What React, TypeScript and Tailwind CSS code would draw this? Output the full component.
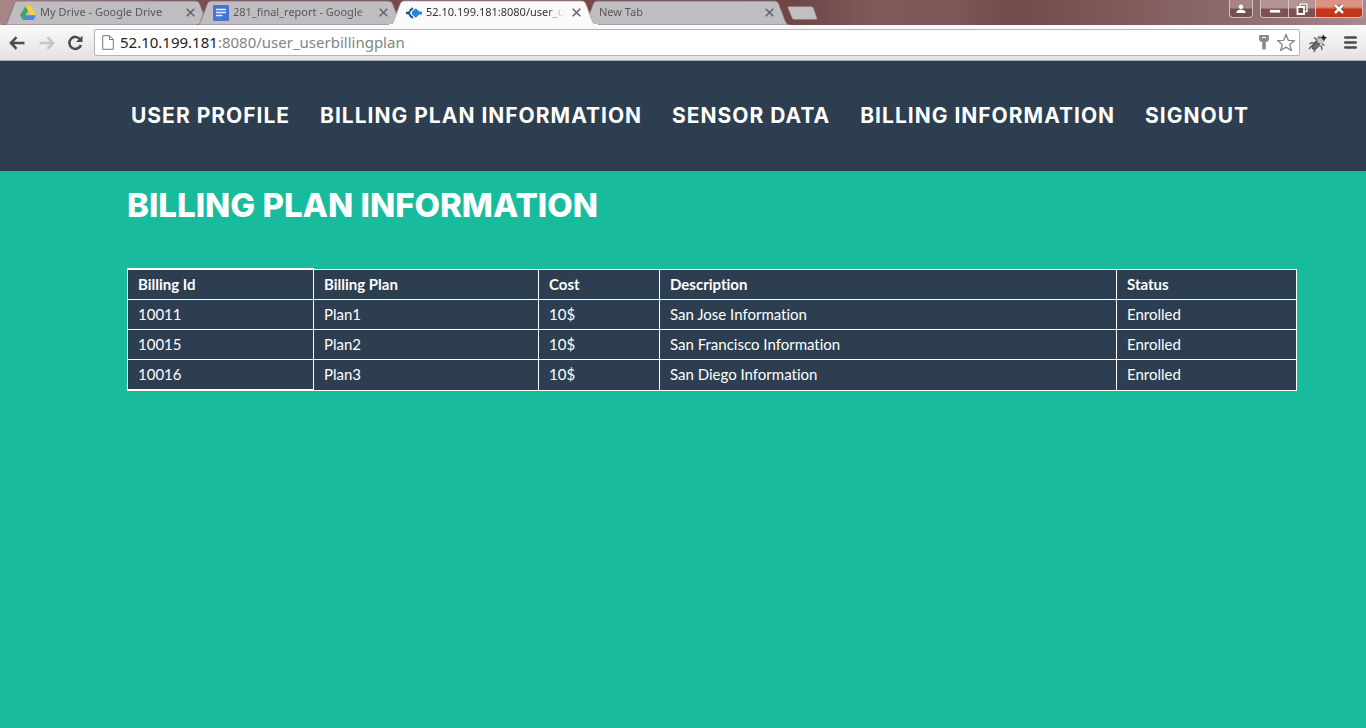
import type { ReactNode } from "react";

const ui = "font-['Noto_Sans',sans-serif]";

function CloseMark() {
  return (
    <svg viewBox="0 0 9 9" className="size-[9px]" aria-hidden="true">
      <path d="M0.7 0.7 8.3 8.3M8.3 0.7 0.7 8.3" stroke="currentColor" strokeWidth="1.6" />
    </svg>
  );
}

function DriveIcon() {
  return (
    <svg viewBox="0 0 16 14" className="h-[14px] w-4 shrink-0" aria-hidden="true">
      <path d="M5.5 0 0 9.3 2.7 14 8.2 4.7Z" fill="#3fa66a" />
      <path d="M5.5 0H10.6L16 9.3H10.8Z" fill="#fbcf3a" />
      <path d="M5.4 9.3H16L13.3 14H2.7Z" fill="#4a86e0" />
    </svg>
  );
}

function DocsIcon() {
  return (
    <svg viewBox="0 0 16 16" className="size-4 shrink-0" aria-hidden="true">
      <rect width="16" height="16" rx="1" fill="#4774cf" />
      <path d="M3 4.5H13M3 7.5H13M3 10.5H9.5" stroke="#e8eefb" strokeWidth="1.4" />
    </svg>
  );
}

function SiteIcon() {
  return (
    <svg viewBox="0 0 16 12" className="h-3 w-4 shrink-0" aria-hidden="true">
      <path d="M7 1.2Q4 2.500 2.800 6Q4 9.500 7 10.8" fill="none" stroke="#1b4f86" strokeWidth="1.900" />
      <path d="M0 6H3" stroke="#1b4f86" strokeWidth="2.4" />
      <path d="M9.8 1.200 13.200 4.600H16V7.400H13.200L9.800 10.800 6 7.500V4.500Z" fill="#1e88dd" />
    </svg>
  );
}

type TabProps = { title: string; icon?: ReactNode; active?: boolean };

function Tab({ title, icon, active }: TabProps) {
  return (
    <div className={active ? "relative z-10 -ml-4 h-[25px] w-[209px] shrink" : "relative -ml-4 h-[25px] w-[209px] shrink"}>
      <svg viewBox="0 0 209 25" preserveAspectRatio="none" className="absolute inset-0 size-full" aria-hidden="true">
        <path
          d="M0 25C4 24.500 4 23 5.500 19L11 4.500C12 2 13 1 15.500 1H192C195 1 196 2 197 4.500L202.500 19C204 23 204.500 24.500 209 25Z"
          fill={active ? "#fafafa" : "#bfbdc1"}
          stroke={active ? "#b5a4a6" : "#7f6f74"}
          strokeWidth="0.8"
        />
        {active && <path d="M0 25H209" stroke="#fafafa" strokeWidth="2" />}
      </svg>
      <div className="relative flex h-full items-center gap-1 pr-[17px] pl-[17px]">
        {icon}
        <span
          className={
            active
              ? "min-w-0 flex-1 overflow-hidden text-[11px] whitespace-nowrap text-[#333] [mask-image:linear-gradient(to_right,black_88%,transparent)]"
              : "min-w-0 flex-1 overflow-hidden text-[11px] whitespace-nowrap text-[#5b5759] [mask-image:linear-gradient(to_right,black_90%,transparent)]"
          }
        >
          {title}
        </span>
        <button aria-label={"Close " + title} className="ml-1 text-[#666]">
          <CloseMark />
        </button>
      </div>
    </div>
  );
}

function WindowControls() {
  return (
    <div className="flex h-[18px] items-stretch gap-[7px] pr-[3px]">
      <button
        aria-label="Switch person"
        className="flex w-6 items-center justify-center rounded-b border border-t-0 border-[#d3bfc0] bg-linear-to-b from-[#a98587] from-45% to-[#755052] to-55%"
      >
        <svg viewBox="0 0 10 10" className="size-[10px]" aria-hidden="true">
          <circle cx="5" cy="2.700" r="2.200" fill="#fff" />
          <path d="M0.500 9V7.500Q2 5.500 5 5.500T9.500 7.500V9Z" fill="#fff" />
        </svg>
      </button>
      <div className="flex overflow-hidden rounded-b border border-t-0 border-[#d3bfc0]">
        <button
          aria-label="Minimize"
          className="flex w-7 items-center justify-center border-r border-[#d3bfc0] bg-linear-to-b from-[#b59496] from-45% to-[#7c5153] to-55%"
        >
          <svg viewBox="0 0 12 10" className="h-[10px] w-3" aria-hidden="true">
            <rect x="0.500" y="5.500" width="11" height="3.500" fill="#fff" stroke="#5e4a4e" strokeWidth="0.700" />
          </svg>
        </button>
        <button
          aria-label="Restore"
          className="flex w-[27px] items-center justify-center border-r border-[#d3bfc0] bg-linear-to-b from-[#b59496] from-45% to-[#7c5153] to-55%"
        >
          <svg viewBox="0 0 12 12" className="size-3" aria-hidden="true">
            <path d="M4 1H11V8.500H4Z" fill="none" stroke="#4c3d42" strokeWidth="2.400" />
            <path d="M4 1H11V8.500H4Z" fill="none" stroke="#fff" strokeWidth="1.500" />
            <path d="M1.500 4H8V11H1.500Z" fill="#6c4a4c" stroke="#fff" strokeWidth="1.800" />
          </svg>
        </button>
        <button
          aria-label="Close window"
          className="flex w-[46px] items-center justify-center bg-linear-to-b from-[#dc9383] from-40% to-[#c23717] to-55%"
        >
          <svg viewBox="0 0 12 10" className="h-[10px] w-3" aria-hidden="true">
            <path d="M2 1 10 9M10 1 2 9" stroke="#5c2d2b" strokeWidth="3.800" />
            <path d="M2 1 10 9M10 1 2 9" stroke="#fff" strokeWidth="2.600" />
          </svg>
        </button>
      </div>
    </div>
  );
}

function TabStrip() {
  return (
    <div className="flex h-[25px] items-start justify-between bg-[linear-gradient(to_right,#a98788_0%,#7b4c4e_15%,#6f4546_58%,#7f595a_64%,#7d5758_70%,#714b4c_74%,#7f5a5b_82%,#8f6f70_92%,#a98b8c_100%)]">
      <div className="flex min-w-0 pl-[19px]">
        <Tab title="My Drive - Google Drive" icon={<DriveIcon />} />
        <Tab title="281_final_report - Google" icon={<DocsIcon />} />
        <Tab title="52.10.199.181:8080/user_u" icon={<SiteIcon />} active />
        <Tab title="New Tab" />
        <button aria-label="New tab" className="mt-[6px] -ml-1 h-[14px] w-[31px]">
          <svg viewBox="0 0 31 14" className="h-[14px] w-[31px]" aria-hidden="true">
            <path
              d="M2 0.500H24Q26 0.500 26.500 2L30 12Q30.500 13.500 29 13.500H7Q5.500 13.500 5 12L1 2Q0.500 0.500 2 0.500Z"
              fill="#c2bfc3"
              stroke="#8b7578"
              strokeWidth="0.700"
            />
          </svg>
        </button>
      </div>
      <WindowControls />
    </div>
  );
}

function ArrowMark() {
  return (
    <svg viewBox="0 0 16 14" className="h-[14px] w-4" aria-hidden="true">
      <path d="M7.500 1.200 2 7 7.500 12.800M2 7H15.500" fill="none" stroke="currentColor" strokeWidth="2.600" />
    </svg>
  );
}

function Toolbar() {
  return (
    <div className="flex h-9 items-center border-b border-[#a9a9aa] bg-linear-to-b from-[#fafafa] to-[#e4e2e2] pr-[9px] pl-[9px]">
      <button aria-label="Back" className="text-[#4d4d4d]">
        <ArrowMark />
      </button>
      <button aria-label="Forward" className="ml-[14px] rotate-180 text-[#c6c6c6]">
        <ArrowMark />
      </button>
      <button aria-label="Reload" className="ml-[12px] text-[#4d4d4d]">
        <svg viewBox="0 0 17 16" className="h-4 w-[17px]" aria-hidden="true">
          <path d="M13.300 4.500A6 6 0 1 0 14 10" fill="none" stroke="currentColor" strokeWidth="2.600" />
          <path d="M15.500 0.500V7H9Z" fill="currentColor" />
        </svg>
      </button>
      <div className="ml-[10px] flex h-[27px] min-w-0 flex-1 items-center rounded-xs border border-[#b4b4b6] bg-white pr-[3px] pl-[7px]">
        <svg viewBox="0 0 12 15" className="h-[15px] w-3 shrink-0" aria-hidden="true">
          <path d="M0.700 0.700H7.500L11.300 4.500V14.300H0.700ZM7.500 0.700V4.500H11.300" fill="#fff" stroke="#777" />
        </svg>
        <a href="#address" className="ml-[6px] flex-1 truncate text-[15px] text-[#848484]">
          <span className="text-[#222]">52.10.199.181</span>:8080/user_userbillingplan
        </a>
        <button aria-label="Saved password">
          <svg viewBox="0 0 10 15" className="h-[15px] w-[10px]" aria-hidden="true">
            <path d="M1 0H9Q10 0 10 1V5L8 7H6.800V14Q5 15.500 3.200 14V7H2L0 5V1Q0 0 1 0Z" fill="#8b8b8b" />
            <path d="M3 2.500H7" stroke="#fff" />
          </svg>
        </button>
        <button aria-label="Bookmark this page" className="ml-[7px]">
          <svg viewBox="0 0 20 19" className="h-[19px] w-5" aria-hidden="true">
            <path
              d="M10 1.500 12.300 7.300 18.500 7.600 13.700 11.500 15.300 17.500 10 14.100 4.700 17.500 6.300 11.500 1.500 7.600 7.700 7.300Z"
              fill="#fff"
              stroke="#858585"
              strokeWidth="1.300"
              strokeLinejoin="round"
            />
          </svg>
        </button>
      </div>
      <button aria-label="Debugger extension" className="ml-2">
        <svg viewBox="0 0 20 20" className="size-5" aria-hidden="true">
          <path
            d="M1.500 11 4 9.500 7 11M1 16 3.500 13 6 13.500M6 19 7 16.500 9 14.500M14 17 13.500 13.500 11 12.500M16.500 12.500 13.500 10.500M6 4.500 8 6 9.500 9"
            fill="none"
            stroke="#555"
            strokeWidth="1.300"
          />
          <ellipse cx="8" cy="12" rx="3.200" ry="5.600" transform="rotate(42 8 12)" fill="#555" />
          <path d="M5 14.500 10 9.500M7 15.500 11.500 11" stroke="#999" />
          <circle cx="13" cy="6.500" r="4" fill="#c6c6c6" />
          <circle cx="11" cy="4.500" r="1.600" fill="#8d8d8d" />
          <path d="M15.500 1.500 16.500 3.500 19 4.500 17 6 16 8 14.500 6 12.500 4.500 14.500 3.500Z" fill="#222" />
        </svg>
      </button>
      <button aria-label="Menu" className="ml-4">
        <svg viewBox="0 0 13 13" className="size-[13px]" aria-hidden="true">
          <path d="M1.300 1.500H11.700M1.300 6.500H11.700M1.300 11.500H11.700" stroke="#4a4a4a" strokeWidth="2.600" strokeLinecap="round" />
        </svg>
      </button>
    </div>
  );
}

const links = ["User Profile", "Billing Plan Information", "Sensor Data", "Billing Information", "Signout"];

const columns = [
  { name: "Billing Id", width: "w-[186px]" },
  { name: "Billing Plan", width: "w-[225px]" },
  { name: "Cost", width: "w-[121px]" },
  { name: "Description", width: "w-[457px]" },
  { name: "Status", width: "w-[180px]" },
];

const rows = [
  ["10011", "Plan1", "10$", "San Jose Information", "Enrolled"],
  ["10015", "Plan2", "10$", "San Francisco Information", "Enrolled"],
  ["10016", "Plan3", "10$", "San Diego Information", "Enrolled"],
];

export default function App() {
  return (
    <div className="flex min-h-screen flex-col bg-[#18bc9c]">
      <div className={ui}>
        <TabStrip />
        <Toolbar />
      </div>
      <header className="bg-[#2c3e50] pt-10 pb-10 pl-[131px]">
        <nav className="flex gap-[30px] font-['Inter',sans-serif] text-[21px] leading-[30px] font-bold tracking-[1px] whitespace-nowrap text-white uppercase">
          {links.map((link) => (
            <a key={link} href="#nav">
              {link}
            </a>
          ))}
        </nav>
      </header>
      <main className="flex-1 pt-4 pr-[69px] pl-[127px] text-white">
        <h1 className="font-['Inter',sans-serif] text-[33px] leading-9 font-extrabold uppercase">Billing Plan Information</h1>
        <table className="mt-[45px] w-full table-fixed border-collapse text-left font-['Lato',sans-serif] text-[15px] leading-[21px] [font-variant-ligatures:none]">
          <thead>
            <tr>
              {columns.map((column) => (
                <th key={column.name} scope="col" className={column.width + " border border-white bg-[#2c3e50] px-[10px] py-1 font-bold first:border-t-2"}>
                  {column.name}
                </th>
              ))}
            </tr>
          </thead>
          <tbody className="[&>tr:last-child>td:first-child]:border-b-2">
            {rows.map((row) => (
              <tr key={row[0]}>
                {row.map((cell, index) => (
                  <td key={columns[index].name} className="border border-white bg-[#2c3e50] px-[10px] py-1">
                    {cell}
                  </td>
                ))}
              </tr>
            ))}
          </tbody>
        </table>
      </main>
    </div>
  );
}
